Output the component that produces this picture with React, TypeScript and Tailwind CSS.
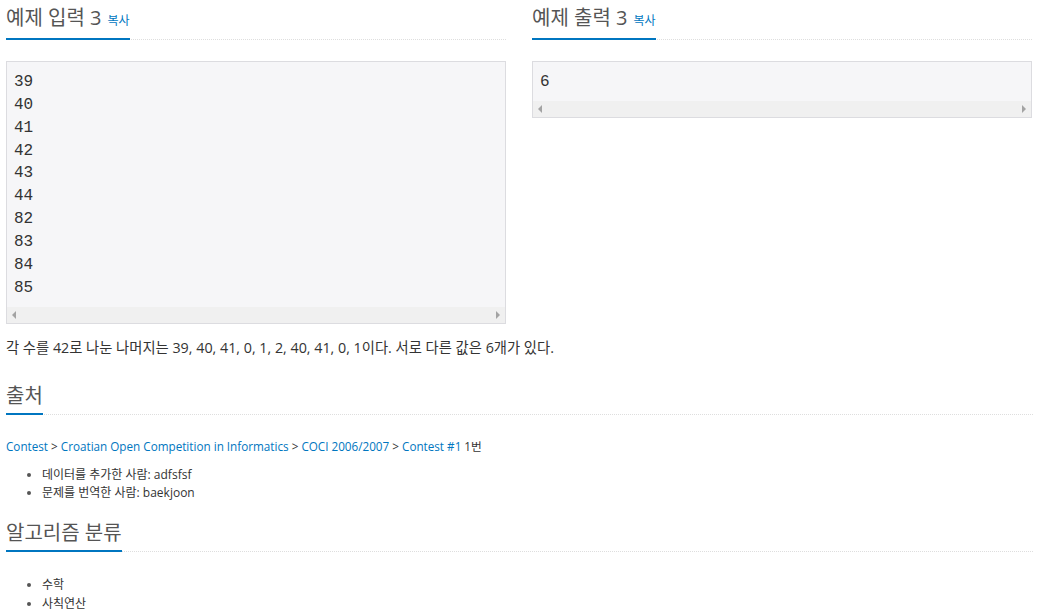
const sans = { fontFamily: '"Open Sans", "Noto Sans CJK KR", sans-serif' };

function Heading({ title, copy }: { title: string; copy?: boolean }) {
  return (
    <div className="flex border-b border-dotted border-[#dedede]">
      <span className="-mb-px border-b-2 border-[#0076c0] pb-[5px] text-[20px] leading-[24px] text-[#555]">
        {title}
        {copy && <a className="ml-[6px] text-[12px] text-[#0076c0]">복사</a>}
      </span>
    </div>
  );
}

function Sample({ lines }: { lines: string[] }) {
  return (
    <div className="mt-[21px] border border-[#dcdce0] bg-[#f6f6f8]">
      <pre
        className="px-[7px] pt-[9px] pb-[7px] text-[16px] leading-[22.86px] text-[#333]"
        style={{ fontFamily: '"Liberation Mono", monospace' }}
      >
        {lines.join('\n')}
      </pre>
      <div className="flex h-[16px] items-center justify-between bg-[#f0f0f0] px-[5px]">
        <span className="h-0 w-0 border-y-[4px] border-r-[4px] border-y-transparent border-r-[#a3a3a3]" />
        <span className="h-0 w-0 border-y-[4px] border-l-[4px] border-y-transparent border-l-[#a3a3a3]" />
      </div>
    </div>
  );
}

export default function App() {
  return (
    <div className="min-h-screen bg-white px-[6px] pt-[6px] text-[#333]" style={sans}>
      <div className="grid grid-cols-[500px_500px] gap-[26px]">
        <section>
          <Heading title="예제 입력 3" copy />
          <Sample lines={['39', '40', '41', '42', '43', '44', '82', '83', '84', '85']} />
        </section>
        <section>
          <Heading title="예제 출력 3" copy />
          <Sample lines={['6']} />
        </section>
      </div>

      <p className="mt-[14px] text-[14.3px] leading-[20px]">
        각 수를 42로 나눈 나머지는 39, 40, 41, 0, 1, 2, 40, 41, 0, 1이다. 서로 다른 값은 6개가 있다.
      </p>

      <div className="mt-[26px]">
        <Heading title="출처" />
      </div>
      <div className="mt-[22px] text-[11.7px] leading-[18px]">
        <a className="text-[#0076c0]">Contest</a> &gt;{' '}
        <a className="text-[#0076c0]">Croatian Open Competition in Informatics</a> &gt;{' '}
        <a className="text-[#0076c0]">COCI 2006/2007</a> &gt;{' '}
        <a className="text-[#0076c0]">Contest #1</a> 1번
      </div>
      <ul className="mt-[11px] list-disc pl-[36px] text-[12px] leading-[18px] marker:text-[#555]">
        <li>데이터를 추가한 사람: adfsfsf</li>
        <li>문제를 번역한 사람: baekjoon</li>
      </ul>

      <div className="mt-[19px]">
        <Heading title="알고리즘 분류" />
      </div>
      <ul className="mt-[23px] list-disc pl-[36px] text-[12px] leading-[19px] marker:text-[#555]">
        <li>수학</li>
        <li>사칙연산</li>
      </ul>
    </div>
  );
}
